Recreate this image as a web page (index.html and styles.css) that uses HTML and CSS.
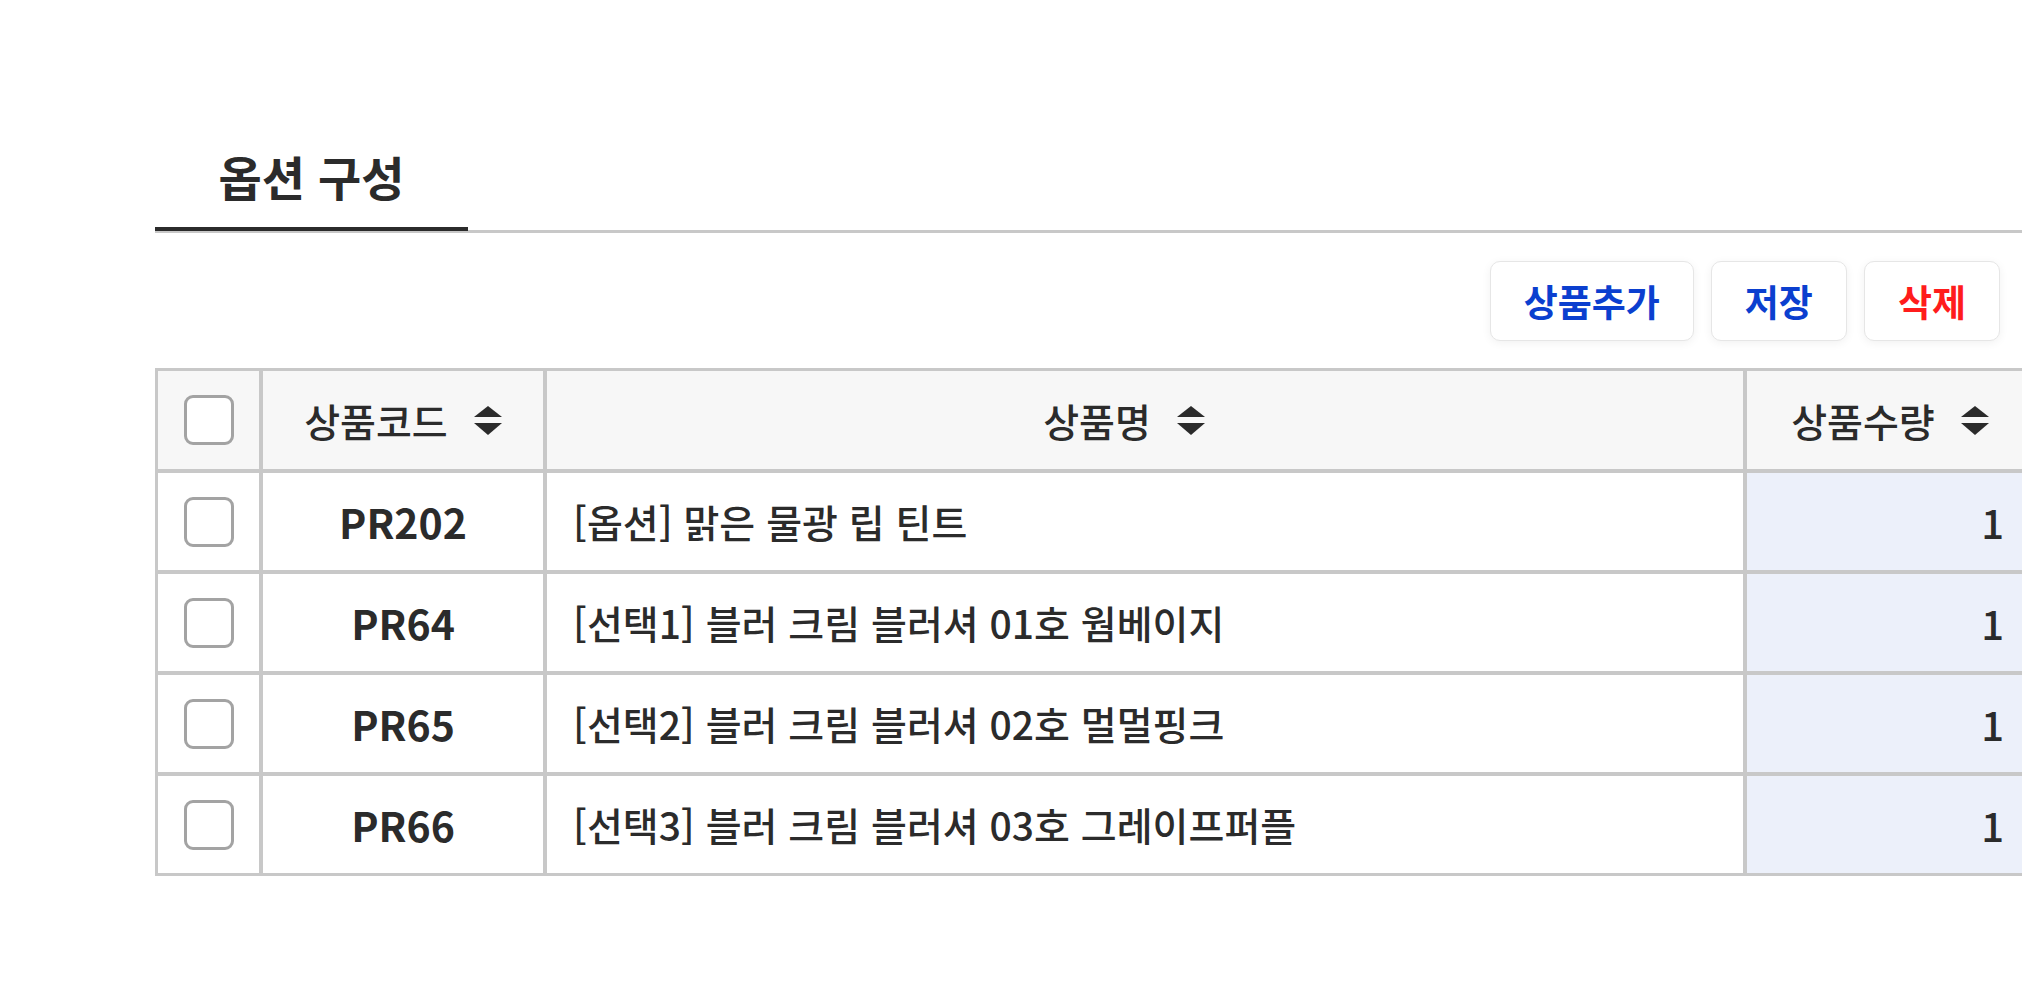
FILE: index.html
```html
<!DOCTYPE html>
<html lang="ko">
<head>
<meta charset="utf-8">
<title>옵션 구성</title>
<link rel="stylesheet" href="styles.css">
</head>
<body>
<div class="page">
  <div class="tabs">
    <div class="tab active">옵션 구성</div>
  </div>
  <div class="toolbar">
    <button class="btn btn-blue">상품추가</button>
    <button class="btn btn-blue">저장</button>
    <button class="btn btn-red">삭제</button>
  </div>
  <table class="grid">
    <thead>
      <tr>
        <th class="col-check"><input type="checkbox" class="chk"></th>
        <th class="col-code"><span class="th-inner">상품코드<svg class="sort" viewBox="0 0 28 29"><polygon points="14,0 28,11 0,11"/><polygon points="0,17 28,17 14,29"/></svg></span></th>
        <th class="col-name"><span class="th-inner">상품명<svg class="sort" viewBox="0 0 28 29"><polygon points="14,0 28,11 0,11"/><polygon points="0,17 28,17 14,29"/></svg></span></th>
        <th class="col-qty"><span class="th-inner">상품수량<svg class="sort" viewBox="0 0 28 29"><polygon points="14,0 28,11 0,11"/><polygon points="0,17 28,17 14,29"/></svg></span></th>
      </tr>
    </thead>
    <tbody>
      <tr>
        <td class="cell-check"><input type="checkbox" class="chk"></td>
        <td class="cell-code">PR202</td>
        <td class="cell-name">[옵션] 맑은 물광 립 틴트</td>
        <td class="cell-qty">1</td>
      </tr>
      <tr>
        <td class="cell-check"><input type="checkbox" class="chk"></td>
        <td class="cell-code">PR64</td>
        <td class="cell-name">[선택1] 블러 크림 블러셔 01호 웜베이지</td>
        <td class="cell-qty">1</td>
      </tr>
      <tr>
        <td class="cell-check"><input type="checkbox" class="chk"></td>
        <td class="cell-code">PR65</td>
        <td class="cell-name">[선택2] 블러 크림 블러셔 02호 멀멀핑크</td>
        <td class="cell-qty">1</td>
      </tr>
      <tr>
        <td class="cell-check"><input type="checkbox" class="chk"></td>
        <td class="cell-code">PR66</td>
        <td class="cell-name">[선택3] 블러 크림 블러셔 03호 그레이프퍼플</td>
        <td class="cell-qty">1</td>
      </tr>
    </tbody>
  </table>
</div>
</body>
</html>
```

FILE: styles.css
```css
html, body {
  margin: 0;
  padding: 0;
  background: #ffffff;
  overflow: hidden;
}

body {
  font-family: "Noto Sans CJK KR", "Noto Sans", sans-serif;
  color: #2b2b2b;
  width: 2022px;
  height: 1004px;
}

.page {
  padding: 120px 0 0 155px;
}

.tabs {
  display: flex;
  border-bottom: 3px solid #c8c8c8;
}

.tab {
  width: 313px;
  text-align: center;
  font-size: 47px;
  line-height: 1;
  font-weight: 700;
  padding: 32px 0 28px;
  border-bottom: 4px solid #2b2b2b;
  margin-bottom: -1px;
  box-sizing: border-box;
  color: #2b2b2b;
}

.toolbar {
  display: flex;
  justify-content: flex-end;
  gap: 17px;
  padding-right: 22px;
  margin-top: 28px;
}

.btn {
  height: 80px;
  padding: 0 33px;
  background: #ffffff;
  border: 1px solid #e6e6e6;
  border-radius: 10px;
  box-shadow: 0 2px 10px rgba(0, 0, 0, 0.06);
  font-family: "Noto Sans CJK KR", "Noto Sans", sans-serif;
  font-size: 37px;
  font-weight: 700;
  line-height: 1;
  cursor: pointer;
}

.btn-blue {
  color: #0b3fcf;
}

.btn-red {
  color: #ff1c1c;
}

.grid {
  margin-top: 27px;
  border-collapse: separate;
  border-spacing: 0;
  border: 1px solid #c8c8c8;
  table-layout: fixed;
  width: 1881px;
}

.grid th,
.grid td {
  box-sizing: border-box;
  border: 2px solid #c8c8c8;
  padding: 0;
  font-size: 39px;
  line-height: 1;
  vertical-align: middle;
}

.grid th {
  height: 102px;
  background: #f7f7f7;
  font-weight: 500;
  text-align: center;
}

.grid td {
  height: 101px;
  background: #ffffff;
}

.col-check { width: 105px; }
.col-code { width: 284px; }
.col-name { width: 1200px; padding-right: 42px !important; }
.col-qty { width: 290px; }

.th-inner {
  display: inline-flex;
  align-items: center;
}

.sort {
  width: 28px;
  height: 29px;
  margin-left: 26px;
  fill: #2b2b2b;
}

.chk {
  appearance: none;
  -webkit-appearance: none;
  display: block;
  margin: 0 auto;
  width: 50px;
  height: 50px;
  border: 3px solid #a3a3a3;
  border-radius: 9px;
  background: #ffffff;
  box-sizing: border-box;
}

.cell-check {
  text-align: center;
}

.cell-code {
  text-align: center;
  font-weight: 700;
  font-size: 41px !important;
}

.cell-name {
  text-align: left;
  padding-left: 26px !important;
  font-weight: 500;
}

.cell-qty {
  text-align: right;
  padding-right: 29px !important;
  font-weight: 500;
  font-size: 40px !important;
  background: #ecf0fa !important;
}
```
